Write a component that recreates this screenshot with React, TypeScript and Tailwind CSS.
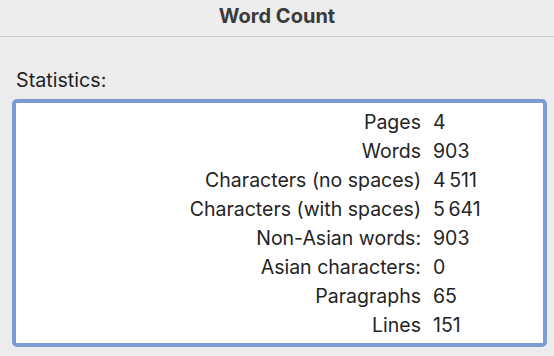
export default function App() {
  const rows: [string, string][] = [
    ["Pages", "4"],
    ["Words", "903"],
    ["Characters (no spaces)", "4\u2009511"],
    ["Characters (with spaces)", "5\u2009641"],
    ["Non-Asian words:", "903"],
    ["Asian characters:", "0"],
    ["Paragraphs", "65"],
    ["Lines", "151"],
  ];
  return (
    <div
      className="w-[554px] h-[356px] bg-[#ececec] text-[#242424] overflow-hidden"
      style={{ fontFamily: "Inter, 'Noto Sans', sans-serif" }}
    >
      <div className="h-[37px] border-b border-[#cfcfcf] bg-[#ededed] flex items-center justify-center pb-[5px]">
        <span className="text-[20px] leading-[24px] font-bold text-[#3b3b3b]">Word Count</span>
      </div>
      <div className="pl-[16px] pt-[30px] text-[19.7px] leading-[26px]">Statistics:</div>
      <div className="ml-[12px] mt-[6px] w-[535px] h-[248px] border-[4px] border-[#7b9cd2] rounded-[5px] bg-white pt-[5px]">
        {rows.map(([k, v]) => (
          <div key={k} className="flex h-[29px] items-center text-[19.5px]">
            <div className="w-[405px] text-right">{k}</div>
            <div className="pl-[12px]">{v}</div>
          </div>
        ))}
      </div>
    </div>
  );
}
